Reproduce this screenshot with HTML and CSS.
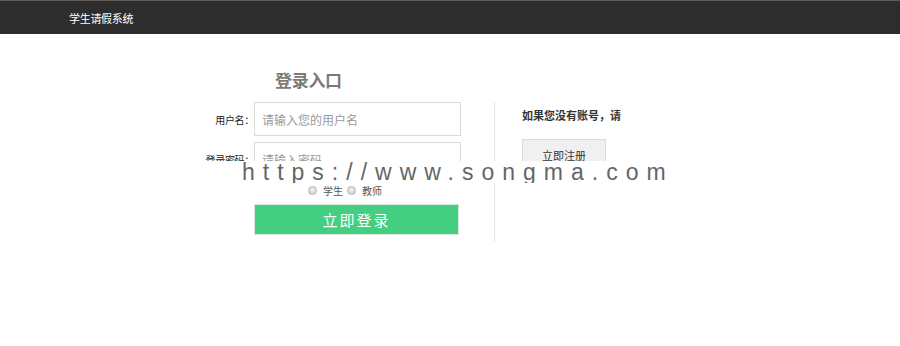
FILE: index.html
```html
<!DOCTYPE html>
<html lang="zh-CN">
<head>
<meta charset="utf-8">
<title>学生请假系统</title>
<link rel="stylesheet" href="styles.css">
</head>
<body>
<header class="topbar">
  <span class="brand">学生请假系统</span>
</header>
<main class="page">
  <section class="login">
    <h1 class="login-title">登录入口</h1>
    <div class="row">
      <label class="label" for="user">用户名：</label>
      <input class="field" id="user" type="text" placeholder="请输入您的用户名">
    </div>
    <div class="row">
      <label class="label" for="pwd">登录密码：</label>
      <input class="field" id="pwd" type="password" placeholder="请输入密码">
    </div>
    <div class="roles">
      <label class="role"><input type="radio" name="role" class="radio"><span>学生</span></label>
      <label class="role"><input type="radio" name="role" class="radio"><span>教师</span></label>
    </div>
    <div class="row">
      <span class="label"></span>
      <button class="submit" type="button">立即登录</button>
    </div>
  </section>
  <aside class="register">
    <p class="register-tip">如果您没有账号，请</p>
    <button class="register-btn" type="button">立即注册</button>
  </aside>
</main>
<div class="watermark">https://www.songma.com</div>
</body>
</html>
```

FILE: styles.css
```css
html, body {
  margin: 0;
  padding: 0;
  background: #fff;
  font-family: "Noto Sans CJK SC", "Liberation Sans", sans-serif;
  color: #333;
}

.topbar {
  height: 34px;
  background: #2d2d2d;
  border-top: 1px solid #5a5a5a;
  display: flex;
  align-items: center;
  padding-left: 69px;
  box-sizing: border-box;
}

.brand {
  color: #fff;
  font-size: 11px;
  letter-spacing: -0.3px;
}

.page {
  display: flex;
  padding-left: 194px;
  padding-top: 35px;
}

.login {
  width: 300px;
}

.login-title {
  margin: 0 0 11px 81px;
  font-size: 17px;
  font-weight: bold;
  color: #7a7a7a;
  line-height: 22px;
  letter-spacing: -0.3px;
}

.row {
  display: flex;
  align-items: center;
  margin-bottom: 6px;
}

.label {
  width: 60px;
  text-align: right;
  font-size: 10px;
  color: #222;
  flex: none;
  letter-spacing: -0.3px;
}

.field {
  width: 207px;
  height: 34px;
  box-sizing: border-box;
  border: 1px solid #d9d9d9;
  padding: 0 7px;
  font-size: 12px;
  font-family: inherit;
  color: #333;
  outline: none;
}

.field::placeholder {
  color: #9a9a9a;
}

.roles {
  display: flex;
  gap: 4px;
  padding-left: 114px;
  height: 14px;
  align-items: center;
  margin: 7px 0 7px;
}

.role {
  display: flex;
  align-items: center;
  font-size: 10px;
  color: #555;
}

.radio {
  appearance: none;
  -webkit-appearance: none;
  width: 9px;
  height: 9px;
  margin: 0 6px 0 0;
  border-radius: 50%;
  border: 1px solid #b5b5b5;
  background: radial-gradient(circle at 50% 40%, #f2f2f2 0%, #d4d4d4 70%, #c4c4c4 100%);
  box-sizing: border-box;
}

.submit {
  width: 205px;
  height: 31px;
  border: 1px solid #d9e8df;
  background: #43ce82;
  color: #fff;
  font-family: inherit;
  font-size: 15px;
  letter-spacing: 2px;
  cursor: pointer;
}

.register {
  border-left: 1px solid #e5e5e5;
  height: 140px;
  margin-top: 33px;
  padding-left: 27px;
}

.register-tip {
  margin: 6px 0 17px;
  font-size: 11px;
  font-weight: bold;
  color: #333;
  line-height: 14px;
}

.register-btn {
  width: 84px;
  height: 32px;
  background: #f0f0f0;
  border: 1px solid #dcdcdc;
  font-family: inherit;
  font-size: 11px;
  color: #333;
}

.watermark {
  position: absolute;
  left: 195px;
  top: 161px;
  width: 490px;
  height: 22px;
  background: #fff;
  font-family: "Liberation Sans", "DejaVu Sans", sans-serif;
  font-size: 23px;
  line-height: 22px;
  letter-spacing: 8px;
  color: #666;
  padding-left: 47px;
  box-sizing: border-box;
  white-space: nowrap;
  overflow: hidden;
}
```
